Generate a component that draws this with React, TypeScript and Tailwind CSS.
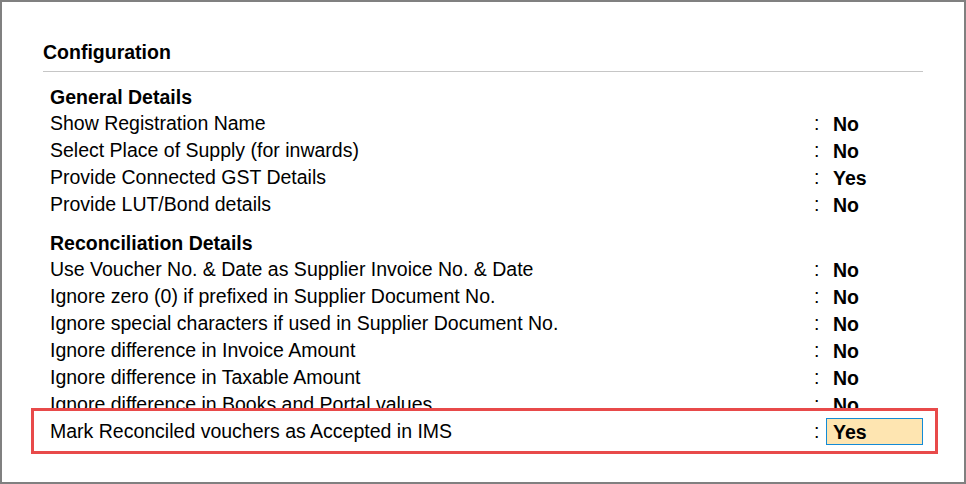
const general = [
  { label: 'Show Registration Name', value: 'No' },
  { label: 'Select Place of Supply (for inwards)', value: 'No' },
  { label: 'Provide Connected GST Details', value: 'Yes' },
  { label: 'Provide LUT/Bond details', value: 'No' },
];

const reconciliation = [
  { label: 'Use Voucher No. & Date as Supplier Invoice No. & Date', value: 'No' },
  { label: 'Ignore zero (0) if prefixed in Supplier Document No.', value: 'No' },
  { label: 'Ignore special characters if used in Supplier Document No.', value: 'No' },
  { label: 'Ignore difference in Invoice Amount', value: 'No' },
  { label: 'Ignore difference in Taxable Amount', value: 'No' },
  { label: 'Ignore difference in Books and Portal values', value: 'No' },
];

function Row({ label, value, active }: { label: string; value: string; active?: boolean }) {
  return (
    <div className="flex h-[27px] items-stretch">
      <div className="flex-1 pl-[7px]">{label}</div>
      <div className="w-[12px]">:</div>
      <div
        className={`w-[97px] border pl-[6px] font-bold ${
          active ? 'border-[#138bd6] bg-[#fee5b1]' : 'border-transparent'
        }`}
      >
        {value}
      </div>
    </div>
  );
}

function Heading({ children }: { children: string }) {
  return <div className="h-[26px] pl-[7px] font-bold">{children}</div>;
}

export default function App() {
  return (
    <div
      className="w-[966px] h-[484px] bg-white border-2 border-[#808080] px-[41px] pt-[37px] text-black text-[19.5px] leading-[27px]"
      style={{ fontFamily: '"Liberation Sans", Arial, sans-serif' }}
    >
      {/* Header */}
      <div className="pb-[5px] border-b border-[#c6c6c6] font-bold">Configuration</div>

      {/* General Details */}
      <div className="mt-[12px]">
        <Heading>General Details</Heading>
        {general.map((r) => (
          <Row key={r.label} label={r.label} value={r.value} />
        ))}
      </div>

      {/* Reconciliation Details */}
      <div className="mt-[12px]">
        <Heading>Reconciliation Details</Heading>
        {reconciliation.map((r) => (
          <Row key={r.label} label={r.label} value={r.value} />
        ))}

        {/* highlighted row */}
        <div className="relative -mt-[10px] -ml-[12px] -mr-[15px] border-[3px] border-[#e84a4a] bg-white pt-[7px] pb-[6px] pl-[9px] pr-[12px]">
          <Row label="Mark Reconciled vouchers as Accepted in IMS" value="Yes" active />
        </div>
      </div>
    </div>
  );
}
